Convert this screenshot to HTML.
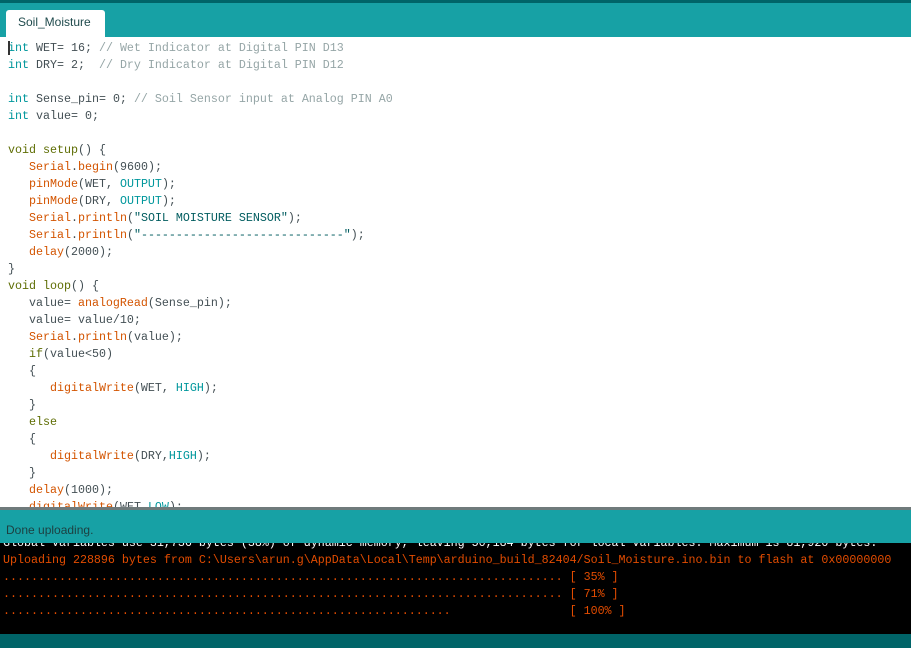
<!DOCTYPE html>
<html><head><meta charset="utf-8"><style>
*{margin:0;padding:0}
body{width:911px;height:648px;overflow:hidden;background:#fff;position:relative;font-family:"Liberation Mono",monospace}
.top{position:absolute;left:0;top:0;width:911px;height:37px;background:#17A1A5;border-top:3px solid #006468;box-sizing:border-box}
.tab{position:absolute;left:6px;top:10px;width:99px;height:27px;background:#fff;border-radius:3px 3px 0 0;font:12px "Liberation Sans",sans-serif;color:#1f4a4c;line-height:25px;text-indent:12px}
.ed{position:absolute;left:0;top:39px;width:911px;height:469px;overflow:hidden}
.l{position:absolute;left:8px;font-size:11.67px;white-space:pre;color:#434F54;line-height:17px;height:17px}
.k{color:#00979C}.f{color:#D35400}.c{color:#95A5A6}.o{color:#5E6D03}.s{color:#005C5F}
.cur{position:absolute;left:8px;top:41px;width:2px;height:14px;background:#333}
.sep{position:absolute;left:0;top:507px;width:911px;height:3px;background:#6f7a7b}
.st{position:absolute;left:0;top:510px;width:911px;height:33px;background:#17A1A5;font:12px "Liberation Sans",sans-serif;color:#1d3f40;line-height:41px;text-indent:6px;overflow:hidden}
.con{position:absolute;left:0;top:543px;width:911px;height:91px;background:#000;overflow:hidden}
.cl{position:absolute;left:3px;font-size:11.67px;white-space:pre;color:#E34C00;line-height:17px}
.bot{position:absolute;left:0;top:634px;width:911px;height:14px;background:#006468}
</style></head><body>
<div class="top"></div>
<div class="tab">Soil_Moisture</div>
<div class="ed">
<div class="l" style="top:1px"><span class="k">int</span> WET= 16; <span class="c">// Wet Indicator at Digital PIN D13</span></div>
<div class="l" style="top:18px"><span class="k">int</span> DRY= 2;  <span class="c">// Dry Indicator at Digital PIN D12</span></div>
<div class="l" style="top:52px"><span class="k">int</span> Sense_pin= 0; <span class="c">// Soil Sensor input at Analog PIN A0</span></div>
<div class="l" style="top:69px"><span class="k">int</span> value= 0;</div>
<div class="l" style="top:103px"><span class="o">void</span> <span class="o">setup</span>() {</div>
<div class="l" style="top:120px">   <span class="f">Serial</span>.<span class="f">begin</span>(9600);</div>
<div class="l" style="top:137px">   <span class="f">pinMode</span>(WET, <span class="k">OUTPUT</span>);</div>
<div class="l" style="top:154px">   <span class="f">pinMode</span>(DRY, <span class="k">OUTPUT</span>);</div>
<div class="l" style="top:171px">   <span class="f">Serial</span>.<span class="f">println</span>(<span class="s">"SOIL MOISTURE SENSOR"</span>);</div>
<div class="l" style="top:188px">   <span class="f">Serial</span>.<span class="f">println</span>(<span class="s">"-----------------------------"</span>);</div>
<div class="l" style="top:205px">   <span class="f">delay</span>(2000);</div>
<div class="l" style="top:222px">}</div>
<div class="l" style="top:239px"><span class="o">void</span> <span class="o">loop</span>() {</div>
<div class="l" style="top:256px">   value= <span class="f">analogRead</span>(Sense_pin);</div>
<div class="l" style="top:273px">   value= value/10;</div>
<div class="l" style="top:290px">   <span class="f">Serial</span>.<span class="f">println</span>(value);</div>
<div class="l" style="top:307px">   <span class="o">if</span>(value&lt;50)</div>
<div class="l" style="top:324px">   {</div>
<div class="l" style="top:341px">      <span class="f">digitalWrite</span>(WET, <span class="k">HIGH</span>);</div>
<div class="l" style="top:358px">   }</div>
<div class="l" style="top:375px">   <span class="o">else</span></div>
<div class="l" style="top:392px">   {</div>
<div class="l" style="top:409px">      <span class="f">digitalWrite</span>(DRY,<span class="k">HIGH</span>);</div>
<div class="l" style="top:426px">   }</div>
<div class="l" style="top:443px">   <span class="f">delay</span>(1000);</div>
<div class="l" style="top:460px">   <span class="f">digitalWrite</span>(WET,<span class="k">LOW</span>);</div>
</div>
<div class="cur"></div>
<div class="sep"></div>
<div class="con">
<div class="cl" style="top:-8px;color:#fff">Global variables use 31,736 bytes (38%) of dynamic memory, leaving 50,184 bytes for local variables. Maximum is 81,920 bytes.</div>
<div class="cl" style="top:9px">Uploading 228896 bytes from C:\Users\arun.g\AppData\Local\Temp\arduino_build_82404/Soil_Moisture.ino.bin to flash at 0x00000000</div>
<div class="cl" style="top:26px">................................................................................ [ 35% ]</div>
<div class="cl" style="top:43px">................................................................................ [ 71% ]</div>
<div class="cl" style="top:60px">................................................................                 [ 100% ]</div>
</div>
<div class="st">Done uploading.</div>
<div class="bot"></div>
</body></html>
